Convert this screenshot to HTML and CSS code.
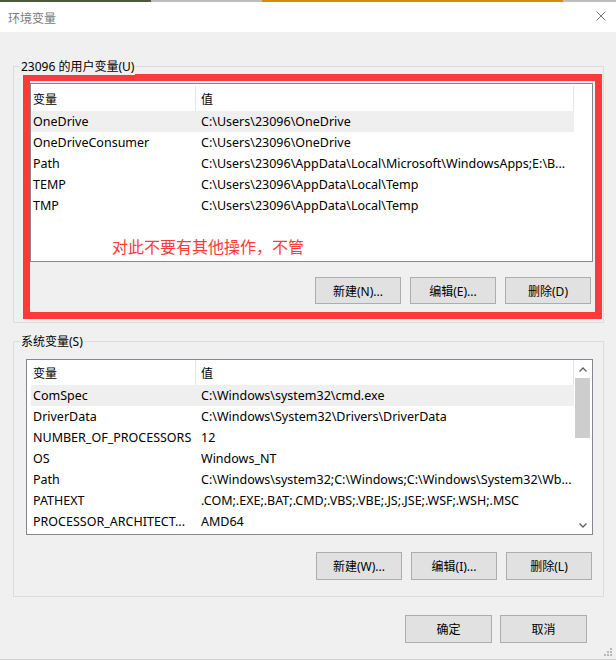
FILE: index.html
```html
<!DOCTYPE html>
<html>
<head>
<meta charset="utf-8">
<title>环境变量</title>
<link rel="stylesheet" href="styles.css">
</head>
<body>
<div class="window">
  <div class="strip"><span class="s1"></span><span class="s2"></span><span class="s3"></span><span class="s4"></span></div>
  <div class="titlebar">
    <span class="title">环境变量</span>
    <svg class="close" width="10" height="10" viewBox="0 0 10 10"><path d="M0.5 0.5L9.5 9.5M9.5 0.5L0.5 9.5" stroke="#7a7a7a" stroke-width="1"/></svg>
  </div>
  <div class="main">
    <div class="group g1">
      <div class="group-label">23096 的用户变量(U)</div>
      <div class="redbox">
        <div class="lv lv1">
          <div class="lv-content">
            <div class="lv-header"><div class="c1">变量</div><div class="c2">值</div></div>
            <div class="row sel"><div class="c1">OneDrive</div><div class="c2">C:\Users\23096\OneDrive</div></div>
            <div class="row"><div class="c1">OneDriveConsumer</div><div class="c2">C:\Users\23096\OneDrive</div></div>
            <div class="row"><div class="c1">Path</div><div class="c2">C:\Users\23096\AppData\Local\Microsoft\WindowsApps;E:\B...</div></div>
            <div class="row"><div class="c1">TEMP</div><div class="c2">C:\Users\23096\AppData\Local\Temp</div></div>
            <div class="row"><div class="c1">TMP</div><div class="c2">C:\Users\23096\AppData\Local\Temp</div></div>
          </div>
          <div class="note">对此不要有其他操作，不管</div>
        </div>
        <div class="btnrow br1">
          <button class="btn">新建(N)...</button>
          <button class="btn">编辑(E)...</button>
          <button class="btn">删除(D)</button>
        </div>
      </div>
    </div>

    <div class="group g2">
      <div class="group-label">系统变量(S)</div>
      <div class="lv lv2">
        <div class="lv-content">
          <div class="lv-header"><div class="c1">变量</div><div class="c2">值</div></div>
          <div class="row sel"><div class="c1">ComSpec</div><div class="c2">C:\Windows\system32\cmd.exe</div></div>
          <div class="row"><div class="c1">DriverData</div><div class="c2">C:\Windows\System32\Drivers\DriverData</div></div>
          <div class="row"><div class="c1">NUMBER_OF_PROCESSORS</div><div class="c2">12</div></div>
          <div class="row"><div class="c1">OS</div><div class="c2">Windows_NT</div></div>
          <div class="row"><div class="c1">Path</div><div class="c2">C:\Windows\system32;C:\Windows;C:\Windows\System32\Wb...</div></div>
          <div class="row"><div class="c1">PATHEXT</div><div class="c2">.COM;.EXE;.BAT;.CMD;.VBS;.VBE;.JS;.JSE;.WSF;.WSH;.MSC</div></div>
          <div class="row"><div class="c1">PROCESSOR_ARCHITECT...</div><div class="c2">AMD64</div></div>
        </div>
        <div class="sb">
          <div class="sb-arrow"><svg width="8" height="5" viewBox="0 0 8 5"><path d="M0.5 4.5L4 1L7.5 4.5" fill="none" stroke="#606060" stroke-width="1.3"/></svg></div>
          <div class="sb-thumb"></div>
          <div class="sb-track"></div>
          <div class="sb-arrow"><svg width="8" height="5" viewBox="0 0 8 5"><path d="M0.5 0.5L4 4L7.5 0.5" fill="none" stroke="#606060" stroke-width="1.3"/></svg></div>
        </div>
      </div>
      <div class="btnrow br2">
        <button class="btn">新建(W)...</button>
        <button class="btn">编辑(I)...</button>
        <button class="btn">删除(L)</button>
      </div>
    </div>

    <div class="footer">
      <button class="btn wide">确定</button>
      <button class="btn wide">取消</button>
    </div>
  </div>
  <div class="bottomline"></div>
  <svg class="grip" width="9" height="9" viewBox="0 0 9 9">
    <rect x="6" y="0" width="2" height="2" fill="#b8b8b8"/>
    <rect x="3" y="3" width="2" height="2" fill="#b8b8b8"/>
    <rect x="6" y="3" width="2" height="2" fill="#b8b8b8"/>
    <rect x="0" y="6" width="2" height="2" fill="#b8b8b8"/>
    <rect x="3" y="6" width="2" height="2" fill="#b8b8b8"/>
    <rect x="6" y="6" width="2" height="2" fill="#b8b8b8"/>
  </svg>
</div>
</body>
</html>
```

FILE: styles.css
```css
* { box-sizing: border-box; }

html, body {
  margin: 0;
  padding: 0;
}

body {
  background: #f0f0f0;
  font-family: "Noto Sans", "Noto Sans CJK SC", sans-serif;
  font-size: 12px;
  color: #000;
}

.window {
  position: relative;
  width: 616px;
  height: 660px;
  display: flex;
  flex-direction: column;
  overflow: hidden;
  background: #f0f0f0;
}

.strip {
  height: 2px;
  display: flex;
  flex: none;
}
.s1 { width: 151px; background: #4c5a3b; }
.s2 { width: 111px; background: #bdbdbd; }
.s3 { width: 301px; background: #d98a0a; }
.s4 { flex: 1; background: #bdbdbd; }

.titlebar {
  height: 30px;
  flex: none;
  background: #fff;
  display: flex;
  align-items: center;
  justify-content: space-between;
  padding: 0 10px 0 8px;
}

.title {
  color: #7a7a7a;
  font-family: "Noto Sans CJK SC", sans-serif;
  font-size: 12px;
}

.close { display: block; margin-top: -2px; }

.main {
  flex: 1;
  display: flex;
  flex-direction: column;
  padding: 34px 12px 0 13px;
}

.group {
  position: relative;
  border: 1px solid #dcdcdc;
}

.group-label {
  position: absolute;
  top: -9px;
  left: 6px;
  padding: 0 1px;
  line-height: 17px;
  background: #f0f0f0;
  font-family: "Noto Sans", "Noto Sans CJK SC", sans-serif;
}

.redbox {
  margin: 7px 1px 3px 9px;
  border: 7px solid #fd3a3a;
  padding: 2px 2px 8px 0;
}

.lv {
  position: relative;
  border: 1px solid #828790;
  background: #fff;
}

.lv1 {
  height: 179px;
  padding-top: 2px;
}

.lv2 {
  height: 176px;
  margin: 17px 10px 0 12px;
  padding-left: 4px;
  display: flex;
}

.lv-content {
  width: 543px;
}

.lv-header {
  display: flex;
  height: 25px;
  align-items: stretch;
}

.lv-header .c1,
.lv-header .c2 {
  display: flex;
  align-items: center;
  border-right: 1px solid #e5e5e5;
}

.lv-header .c1 {
  width: 165px;
  padding-left: 2px;
}

.lv-header .c2 {
  width: 378px;
  padding-left: 5px;
}

.row {
  display: flex;
  height: 21px;
  align-items: center;
  white-space: nowrap;
  font-size: 12.5px;
}

.row .c1 {
  width: 165px;
  padding-left: 2px;
  flex: none;
}

.row .c2 {
  padding-left: 5px;
}

.row.sel {
  background: #efefef;
}

.note {
  position: absolute;
  left: 81px;
  top: 152px;
  line-height: 20px;
  font-size: 16px;
  color: #fd3a3a;
  font-family: "Noto Sans CJK SC", sans-serif;
}

.sb {
  width: 18px;
  margin-left: auto;
  display: flex;
  flex-direction: column;
  background: #fff;
}

.sb-arrow {
  height: 18px;
  display: flex;
  align-items: center;
  justify-content: center;
}

.sb-thumb {
  height: 60px;
  width: 15px;
  margin-left: 1px;
  background: #cdcdcd;
}

.sb-track { flex: 1; }

.btnrow {
  display: flex;
  justify-content: flex-end;
  gap: 9px;
}

.br1 {
  margin-top: 15px;
  padding-right: 2px;
}

.br1 .btn { height: 27px; }

.g2 {
  margin-top: 18px;
}

.br2 {
  margin-top: 17px;
  padding-right: 11px;
  padding-bottom: 16px;
}

.btn {
  width: 86px;
  height: 28px;
  border: 1px solid #adadad;
  background: #e1e1e1;
  font-family: "Noto Sans", "Noto Sans CJK SC", sans-serif;
  font-size: 12px;
  color: #000;
  padding: 0;
  margin: 0;
  display: flex;
  align-items: center;
  justify-content: center;
}

.footer {
  margin-top: 18px;
  display: flex;
  justify-content: flex-end;
  gap: 8px;
  padding-right: 17px;
}

.btn.wide { width: 87px; }

.bottomline {
  height: 1px;
  flex: none;
  background: #cfcfcf;
}

.grip {
  position: absolute;
  right: 3px;
  bottom: 3px;
}
```
